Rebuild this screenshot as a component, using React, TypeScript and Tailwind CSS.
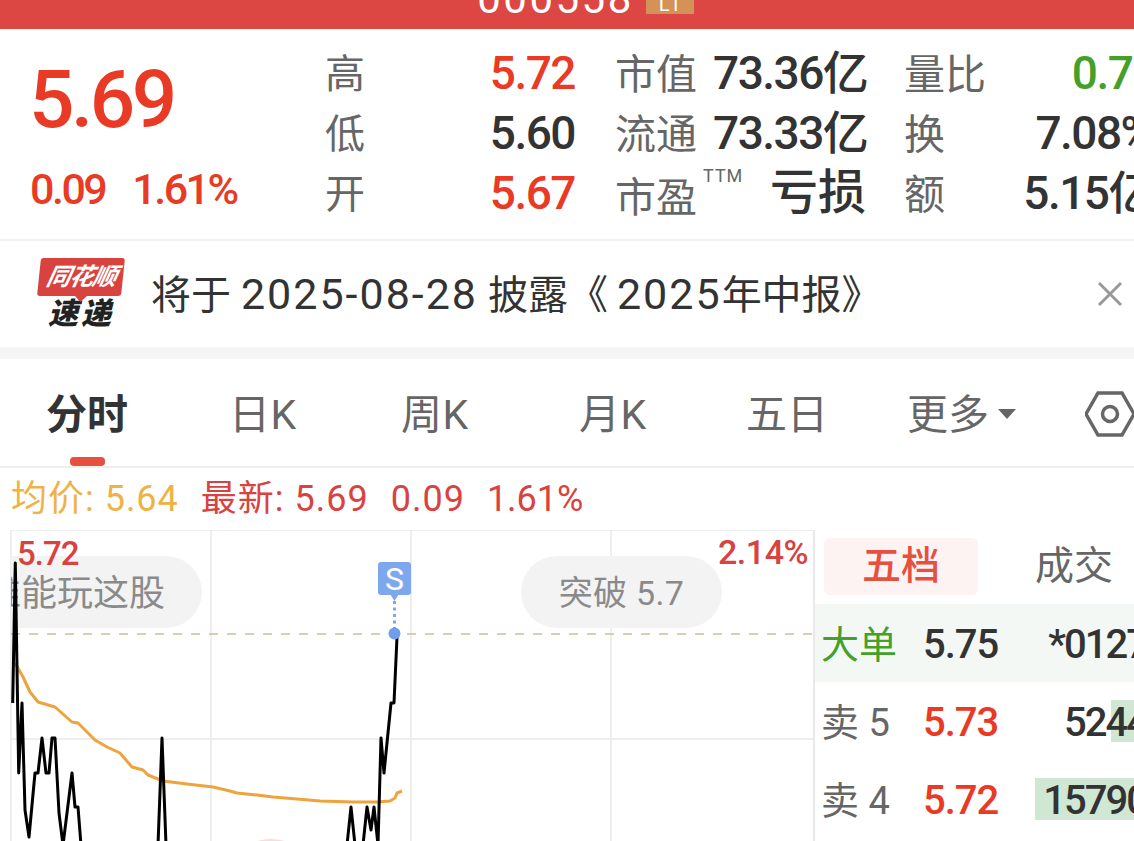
import React from "react";

const sans = "font-['Roboto','Noto_Sans_CJK_SC',sans-serif]";

const blackLine =
  "12.7,703 15.3,563 18.7,773 22,703 25,810 29,837 35,773 38,773 42,738 46,773 49,773 52,738 55,738 59,813 63,845 72,773 75,807 78,807 81,845";
const blackLine2 = "158,845 162,738 166,845";
const blackLine3 =
  "347,845 351,807 355,845 363,845 367,807 371,830 374,807 378,845 381,738 384,773 391,703 394,703 397,637 398,634";
const avgLine =
  "15,663 23,677 30,692 38,702 55,707 72,722 78,723 95,740 107,747 120,753 132,767 143,770 148,775 163,781 187,784 213,787 230,791 237,793 257,795 273,797 297,799 320,801 353,802 377,802 390,801 395,798 397,793 402,791";

function StatRow({
  label,
  value,
  valueColor,
  mid,
  midValue,
  right,
  rightValue,
  rightColor,
}: {
  label: string;
  value: string;
  valueColor: string;
  mid: React.ReactNode;
  midValue: React.ReactNode;
  right: string;
  rightValue: string;
  rightColor?: string;
}) {
  return (
    <div className="flex h-[60px] items-center">
      <span className="w-[60px] shrink-0 text-[40px] leading-none text-[#666]">{label}</span>
      <span className={`w-[190px] shrink-0 pb-[4px] text-right text-[46px] font-medium leading-none tracking-[-1.5px] ${valueColor}`}>
        {value}
      </span>
      <span className="ml-[40px] w-[98px] shrink-0 text-[41px] leading-none whitespace-nowrap text-[#666]">{mid}</span>
      <span className="w-[149px] shrink-0 pb-[4px] text-right text-[46px] font-medium leading-none tracking-[-1.5px] whitespace-nowrap text-[#333]">
        {midValue}
      </span>
      <span className="ml-[42px] w-[90px] shrink-0 text-[41px] leading-none whitespace-nowrap text-[#666]">{right}</span>
      <span className={`w-[159px] shrink-0 pb-[4px] text-right text-[46px] font-medium leading-none tracking-[-1.5px] whitespace-nowrap ${rightColor ?? "text-[#333]"}`}>
        {rightValue}
      </span>
    </div>
  );
}

function Logo() {
  return (
    <div className="flex w-[88px] flex-col items-center">
      <div className="relative flex h-[38px] w-[84px] -skew-x-6 items-center justify-center rounded-[3px] bg-[#d8423f]">
        <span className="-skew-x-6 text-[24px] leading-none font-bold tracking-[-1px] whitespace-nowrap text-white italic">
          同花顺
        </span>
        <span className="absolute -bottom-[6px] left-[38px] h-0 w-0 border-x-[6px] border-t-[6px] border-x-transparent border-t-[#d8423f]" />
      </div>
      <span className="mt-[2px] text-[30px] leading-[32px] font-black tracking-[3px] whitespace-nowrap text-[#222] italic">
        速递
      </span>
    </div>
  );
}

function Chart() {
  return (
    <div className="relative h-[311px] w-[815px] shrink-0 overflow-hidden">
      <svg className="absolute inset-0" width="815" height="311" viewBox="0 530 815 311">
        <g stroke="#e9e9e9" strokeWidth="1.5" fill="none">
          <path d="M11 530H815M11 739H815" />
          <path d="M11 530V841M211 530V841M411 530V841M611 530V841" />
          <path d="M814 530V841" strokeWidth="2" />
        </g>
      </svg>
      <div className="absolute top-0 bottom-0 left-[11px] w-[804px] overflow-hidden">
        <div className="absolute top-[26px] left-[-71px] flex h-[72px] w-[262px] items-center justify-end rounded-full bg-[#f3f3f3] pt-[3px] pr-[37px] text-[36px] whitespace-nowrap text-[#8a8a8a]">
          谁能玩这股
        </div>
        <div className="absolute top-[26px] left-[510px] flex h-[72px] w-[201px] items-center justify-center rounded-full bg-[#f3f3f3] pt-[3px] text-[34px] tracking-[0.3px] whitespace-nowrap text-[#8a8a8a]">
          突破 5.7
        </div>
      </div>
      <svg className="absolute inset-0" width="815" height="311" viewBox="0 530 815 311">
        <path d="M11 634H812" stroke="#cbbd9f" strokeWidth="1.5" strokeDasharray="9 9" fill="none" />
        <path d="M257 841Q271 837 285 841Z" fill="#fbdcdc" />
        <polyline points={avgLine} fill="none" stroke="#eea33c" strokeWidth="3" strokeLinejoin="round" />
        <polyline points={blackLine} fill="none" stroke="#000" strokeWidth="3" strokeLinejoin="round" />
        <polyline points={blackLine2} fill="none" stroke="#000" strokeWidth="3" strokeLinejoin="round" />
        <polyline points={blackLine3} fill="none" stroke="#000" strokeWidth="3" strokeLinejoin="round" />
        <path d="M390 594H399L394.5 601Z" fill="#7ea8ee" />
        <path d="M394.5 601V630" stroke="#7ea8ee" strokeWidth="3" strokeDasharray="3 3.5" />
        <circle cx="394.5" cy="633.5" r="6" fill="#6f9fea" />
      </svg>
      <span className="absolute top-[5px] left-[17px] text-[33px] leading-[38px] font-medium tracking-[-1px] text-[#d8423f]">
        5.72
      </span>
      <span className="absolute top-[3px] right-[7px] text-[34px] leading-[38px] font-medium tracking-[-0.5px] text-[#d8423f]">
        2.14%
      </span>
      <div className="absolute top-[32px] left-[378px] flex h-[33px] w-[33px] items-center justify-center rounded-[3px] bg-[#7ea8ee] text-[32px] leading-none text-white">
        S
      </div>
    </div>
  );
}

function BookRow({
  label,
  price,
  vol,
  barLeft,
  labelColor,
  priceColor,
  bg,
}: {
  label: string;
  price: string;
  vol: string;
  barLeft?: number;
  labelColor: string;
  priceColor: string;
  bg?: string;
}) {
  return (
    <div className={`relative flex h-[78px] items-center pt-[3px] pl-[6px] whitespace-nowrap ${bg ?? ""}`}>
      {barLeft !== undefined && (
        <span className="absolute top-[18px] h-[42px] w-[200px] bg-[#d0e7d3]" style={{ left: barLeft }} />
      )}
      <span className={`relative w-[102px] shrink-0 text-[38px] leading-none ${labelColor}`}>{label}</span>
      <span className={`relative w-[86px] shrink-0 text-[40px] leading-none font-medium tracking-[-1px] ${priceColor}`}>
        {price}
      </span>
      <span className="relative w-[138px] shrink-0 text-right text-[40px] leading-none font-medium tracking-[-2px] text-[#333]">
        {vol}
      </span>
    </div>
  );
}

function OrderBook() {
  return (
    <div className="w-[319px] shrink-0 overflow-hidden">
      <div className="flex h-[74px] items-start pt-[8px] pl-[9px]">
        <div className="flex h-[57px] w-[154px] items-center justify-center rounded-[6px] bg-[#fdf3f3] text-[39px] font-medium text-[#e5503f]">
          五档
        </div>
        <div className="ml-[57px] flex h-[57px] items-center text-[39px] whitespace-nowrap text-[#666]">成交</div>
      </div>
      <BookRow label="大单" price="5.75" vol="*0127" labelColor="text-[#45a02b]" priceColor="text-[#333]" bg="bg-[#f3f8f5]" />
      <BookRow label="卖 5" price="5.73" vol="5244" barLeft={296} labelColor="text-[#666]" priceColor="text-[#e93a25]" />
      <BookRow label="卖 4" price="5.72" vol="15790" barLeft={220} labelColor="text-[#666]" priceColor="text-[#e93a25]" />
    </div>
  );
}

export default function App() {
  return (
    <div className={`h-[841px] w-[1134px] overflow-hidden bg-white ${sans}`}>
      <header className="flex h-[29px] items-end justify-center overflow-hidden bg-[#dd4743] pb-[15px] pl-[37px]">
        <span className="mb-[-6px] text-[42px] leading-none tracking-[2.5px] text-white">000558</span>
        <span className="ml-[12px] flex h-[28px] w-[48px] items-end justify-center bg-[#d49257] text-[20px] leading-none text-white">
          L1
        </span>
      </header>

      <section className="flex h-[212px] border-b-2 border-[#f0f0f0]">
        <div className="w-[325px] shrink-0 pt-[26px] pl-[29px]">
          <div className="text-[80px] leading-[90px] font-medium tracking-[-3.5px] text-[#e93a25]">5.69</div>
          <div className="mt-[21px] ml-[1px] flex gap-[27px] text-[43px] leading-[46px] font-medium tracking-[-2.5px] text-[#e93a25]">
            <span>0.09</span>
            <span>1.61%</span>
          </div>
        </div>
        <div className="shrink-0 pt-[16px]">
          <StatRow label="高" value="5.72" valueColor="text-[#e93a25]" mid="市值" midValue="73.36亿" right="量比" rightValue="0.78" rightColor="relative left-[4px] text-[#45a02b]" />
          <StatRow label="低" value="5.60" valueColor="text-[#333]" mid="流通" midValue="73.33亿" right="换" rightValue="7.08%" />
          <StatRow
            label="开"
            value="5.67"
            valueColor="text-[#e93a25]"
            mid={
              <span className="relative top-[3px]">
                市盈
                <sup className="absolute top-[-7px] left-[88px] text-[18px] leading-none tracking-[1px]">TTM</sup>
              </span>
            }
            midValue={<span className="relative left-[4px] text-[48px] tracking-[0px]">亏损</span>}
            right="额"
            rightValue="5.15亿"
          />
        </div>
      </section>

      <section className="flex h-[106px] items-center pl-[37px]">
        <Logo />
        <span className="ml-[26px] text-[40px] leading-none whitespace-nowrap text-[#333]">
          将于 <span className="text-[43px] tracking-[2px]">2025-08-28</span> 披露《<span className="ml-[9px] text-[43px] tracking-[2px]">2025</span>年中报》
        </span>
        <svg className="ml-auto mr-[11px]" width="26" height="26" viewBox="0 0 26 26" stroke="#999" strokeWidth="3" fill="none">
          <path d="M2 2L24 24M24 2L2 24" />
        </svg>
      </section>

      <div className="h-[12px] bg-[#f5f5f5]" />

      <nav className="relative flex h-[109px] items-center border-b-2 border-[#efefef] pt-[6px] text-[41px] whitespace-nowrap text-[#666]">
        <div className="ml-[46px] w-[183px] font-bold text-[#333]">分时</div>
        <span className="absolute bottom-0 left-[70px] h-[9px] w-[35px] rounded-[4px] bg-[#e5503f]" />
        <div className="w-[172px] tracking-[0.5px]">日K</div>
        <div className="w-[178px] tracking-[0.5px]">周K</div>
        <div className="w-[167px] tracking-[0.5px]">月K</div>
        <div className="w-[161px]">五日</div>
        <div className="flex w-[176px] items-center">
          更多
          <span className="mb-[4px] ml-[9px] h-0 w-0 border-x-[9px] border-t-[10px] border-x-transparent border-t-[#666]" />
        </div>
        <svg width="50" height="46" viewBox="0 0 50 46" fill="none" stroke="#666" strokeWidth="3.5" className="absolute top-[32px] left-[1085px]">
          <path d="M13 2H37L49 23L37 44H13L1 23Z" />
          <circle cx="25" cy="23" r="7.5" />
        </svg>
      </nav>

      <div className="flex h-[62px] items-center gap-[22px] pl-[11px] text-[36px] leading-none tracking-[1px] whitespace-nowrap">
        <span className="text-[#efb245]">均价: 5.64</span>
        <span className="flex gap-[22px] text-[#d8423f]">
          <span>最新: 5.69</span>
          <span>0.09</span>
          <span className="tracking-[0px]">1.61%</span>
        </span>
      </div>

      <div className="flex">
        <Chart />
        <OrderBook />
      </div>
    </div>
  );
}
